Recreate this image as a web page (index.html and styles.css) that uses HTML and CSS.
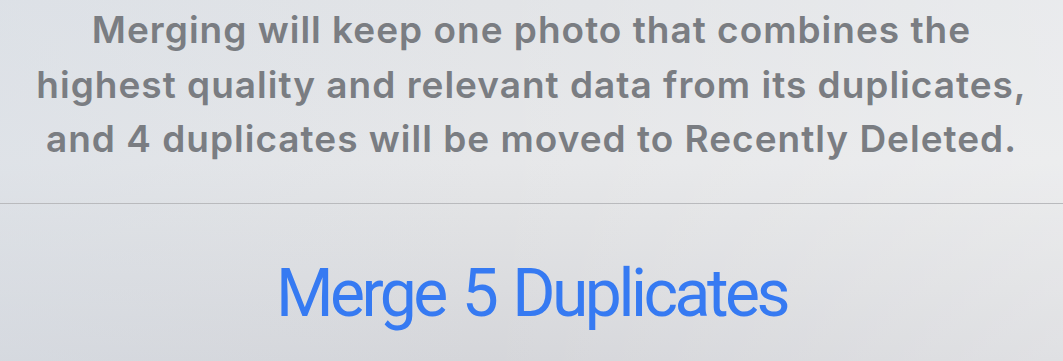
FILE: index.html
```html
<!DOCTYPE html>
<html lang="en">
<head>
<meta charset="utf-8">
<link rel="stylesheet" href="styles.css">
</head>
<body>
<div class="sheet">
  <div class="message">
    <p>Merging will keep one photo that combines the<br>highest quality and relevant data from its duplicates,<br>and 4 duplicates will be moved to Recently Deleted.</p>
  </div>
  <div class="action">Merge 5 Duplicates</div>
</div>
</body>
</html>
```
FILE: styles.css
```css
html, body {
  margin: 0;
  padding: 0;
  width: 1063px;
  height: 361px;
  overflow: hidden;
}
.sheet {
  width: 1063px;
  height: 361px;
  display: flex;
  flex-direction: column;
  background:
    linear-gradient(90deg, rgba(214, 221, 230, 0.45) 0%, rgba(255, 255, 255, 0) 45%, rgba(255, 255, 255, 0.25) 100%),
    linear-gradient(180deg, #e2e4e7 0%, #e6e7e9 45%, #e1e2e4 60%, #d5d6da 100%);
  font-family: Inter, "Noto Sans", sans-serif;
}
.message {
  height: 204px;
  box-sizing: border-box;
  border-bottom: 1px solid #b9babd;
  display: flex;
  justify-content: center;
  padding-top: 3px;
}
.message p {
  margin: 0;
  text-align: center;
  color: #7a7d82;
  font-size: 37px;
  font-weight: 600;
  line-height: 54.5px;
  letter-spacing: 1px;
}
.action {
  flex: 1;
  display: flex;
  align-items: center;
  justify-content: center;
  color: #367af2;
  font-family: Roboto, Inter, sans-serif;
  font-size: 66px;
  font-weight: 400;
  letter-spacing: -3.5px;
  word-spacing: 4px;
  padding-top: 22px;
}
```
